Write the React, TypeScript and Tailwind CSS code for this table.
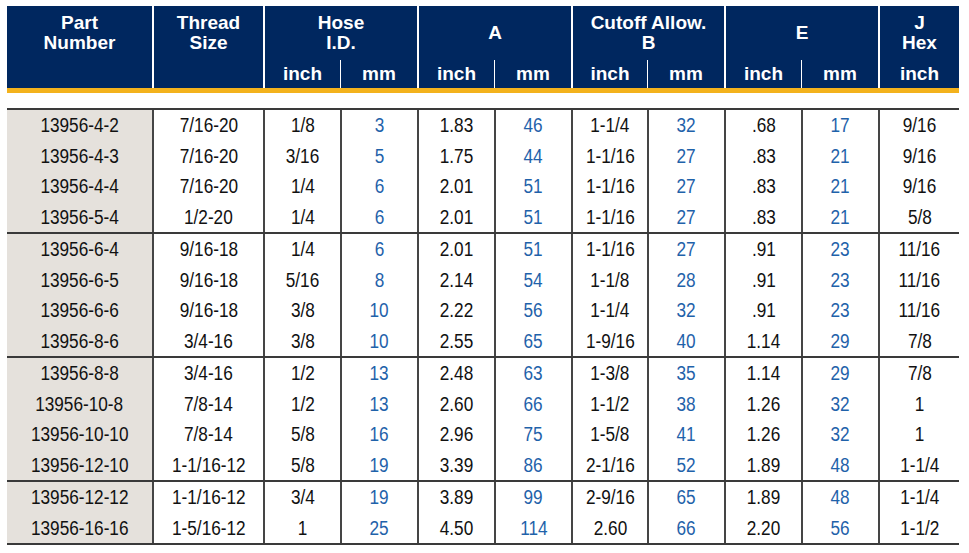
const cols =
  "grid grid-cols-[145px_111px_77px_77px_77px_77px_76px_77px_77px_77px_81px]";

type Row = string[];

const groups: Row[][] = [
  [
    ["13956-4-2", "7/16-20", "1/8", "3", "1.83", "46", "1-1/4", "32", ".68", "17", "9/16"],
    ["13956-4-3", "7/16-20", "3/16", "5", "1.75", "44", "1-1/16", "27", ".83", "21", "9/16"],
    ["13956-4-4", "7/16-20", "1/4", "6", "2.01", "51", "1-1/16", "27", ".83", "21", "9/16"],
    ["13956-5-4", "1/2-20", "1/4", "6", "2.01", "51", "1-1/16", "27", ".83", "21", "5/8"],
  ],
  [
    ["13956-6-4", "9/16-18", "1/4", "6", "2.01", "51", "1-1/16", "27", ".91", "23", "11/16"],
    ["13956-6-5", "9/16-18", "5/16", "8", "2.14", "54", "1-1/8", "28", ".91", "23", "11/16"],
    ["13956-6-6", "9/16-18", "3/8", "10", "2.22", "56", "1-1/4", "32", ".91", "23", "11/16"],
    ["13956-8-6", "3/4-16", "3/8", "10", "2.55", "65", "1-9/16", "40", "1.14", "29", "7/8"],
  ],
  [
    ["13956-8-8", "3/4-16", "1/2", "13", "2.48", "63", "1-3/8", "35", "1.14", "29", "7/8"],
    ["13956-10-8", "7/8-14", "1/2", "13", "2.60", "66", "1-1/2", "38", "1.26", "32", "1"],
    ["13956-10-10", "7/8-14", "5/8", "16", "2.96", "75", "1-5/8", "41", "1.26", "32", "1"],
    ["13956-12-10", "1-1/16-12", "5/8", "19", "3.39", "86", "2-1/16", "52", "1.89", "48", "1-1/4"],
  ],
  [
    ["13956-12-12", "1-1/16-12", "3/4", "19", "3.89", "99", "2-9/16", "65", "1.89", "48", "1-1/4"],
    ["13956-16-16", "1-5/16-12", "1", "25", "4.50", "114", "2.60", "66", "2.20", "56", "1-1/2"],
  ],
];

const mmCols = [3, 5, 7, 9];

function HeaderTop({ lines, span, first }: { lines: string[]; span?: boolean; first?: boolean }) {
  return (
    <div
      className={`${span ? "col-span-2" : ""} ${first ? "" : "border-l-2 border-white"} flex h-[54px] flex-col items-center justify-center leading-[20px]`}
    >
      {lines.map((l) => (
        <span key={l}>{l}</span>
      ))}
    </div>
  );
}

function HeaderSub({ label, major }: { label: string; major?: boolean }) {
  return (
    <div
      className={`${major ? "border-l-2 border-white" : "border-l-[1.5px] border-white"} flex h-[28px] items-center justify-center`}
    >
      {label}
    </div>
  );
}

export default function App() {
  return (
    <div
      className="min-h-[553px] bg-white pl-[7px] pt-[6px]"
      style={{ fontFamily: '"Liberation Sans", Arial, sans-serif' }}
    >
      <div className="w-[952px]">
        <div className={`${cols} grid-rows-[54px_28px] bg-[#00275f] text-[19px] font-bold text-white`}>
          <div className="row-span-2">
            <HeaderTop lines={["Part", "Number"]} first />
          </div>
          <div className="row-span-2 border-l-2 border-white">
            <div className="flex h-[54px] flex-col items-center justify-center leading-[20px]">
              <span>Thread</span>
              <span>Size</span>
            </div>
          </div>
          <HeaderTop lines={["Hose", "I.D."]} span />
          <HeaderTop lines={["A"]} span />
          <HeaderTop lines={["Cutoff Allow.", "B"]} span />
          <HeaderTop lines={["E"]} span />
          <HeaderTop lines={["J", "Hex"]} />
          <HeaderSub label="inch" major />
          <HeaderSub label="mm" />
          <HeaderSub label="inch" major />
          <HeaderSub label="mm" />
          <HeaderSub label="inch" major />
          <HeaderSub label="mm" />
          <HeaderSub label="inch" major />
          <HeaderSub label="mm" />
          <HeaderSub label="inch" major />
        </div>
        <div className="h-[5px] bg-[#f3b21d]" />
        <div className="h-[15px]" />
        <div className="border-b-2 border-[#3a3a3a] text-[20px] text-[#111111]">
          {groups.map((g, gi) => (
            <div key={gi} className="border-t-2 border-[#3a3a3a]">
              {g.map((row) => (
                <div key={row[0]} className={cols}>
                  {row.map((v, ci) => (
                    <div
                      key={ci}
                      className={`flex h-[30.5px] items-center justify-center ${
                        ci === 0 ? "bg-[#e5e1dc]" : "border-l-2 border-[#454545]"
                      } ${mmCols.includes(ci) ? "text-[#1f62aa]" : ""}`}
                    >
                      <span className="inline-block scale-x-[0.86] whitespace-nowrap">{v}</span>
                    </div>
                  ))}
                </div>
              ))}
            </div>
          ))}
        </div>
      </div>
    </div>
  );
}
